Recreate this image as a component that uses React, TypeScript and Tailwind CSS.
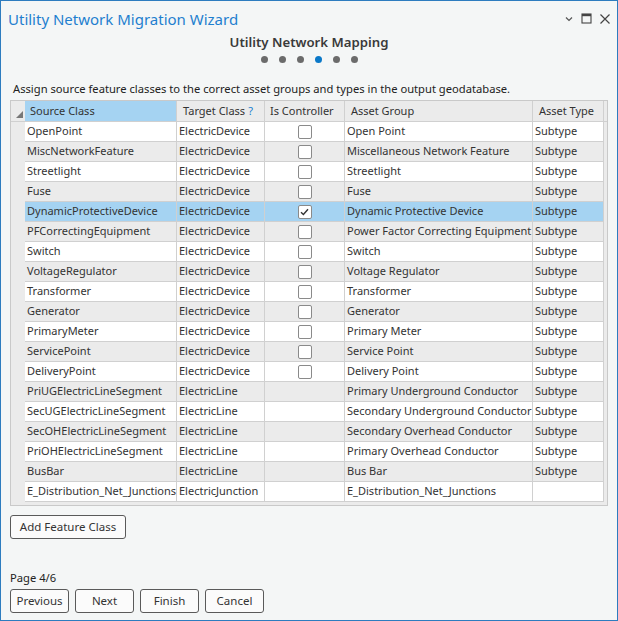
import React from "react";

type Row = {
  source: string;
  target: string;
  controller: boolean | null;
  group: string;
  type: string;
};

const rows: Row[] = [
  { source: "OpenPoint", target: "ElectricDevice", controller: false, group: "Open Point", type: "Subtype" },
  { source: "MiscNetworkFeature", target: "ElectricDevice", controller: false, group: "Miscellaneous Network Feature", type: "Subtype" },
  { source: "Streetlight", target: "ElectricDevice", controller: false, group: "Streetlight", type: "Subtype" },
  { source: "Fuse", target: "ElectricDevice", controller: false, group: "Fuse", type: "Subtype" },
  { source: "DynamicProtectiveDevice", target: "ElectricDevice", controller: true, group: "Dynamic Protective Device", type: "Subtype" },
  { source: "PFCorrectingEquipment", target: "ElectricDevice", controller: false, group: "Power Factor Correcting Equipment", type: "Subtype" },
  { source: "Switch", target: "ElectricDevice", controller: false, group: "Switch", type: "Subtype" },
  { source: "VoltageRegulator", target: "ElectricDevice", controller: false, group: "Voltage Regulator", type: "Subtype" },
  { source: "Transformer", target: "ElectricDevice", controller: false, group: "Transformer", type: "Subtype" },
  { source: "Generator", target: "ElectricDevice", controller: false, group: "Generator", type: "Subtype" },
  { source: "PrimaryMeter", target: "ElectricDevice", controller: false, group: "Primary Meter", type: "Subtype" },
  { source: "ServicePoint", target: "ElectricDevice", controller: false, group: "Service Point", type: "Subtype" },
  { source: "DeliveryPoint", target: "ElectricDevice", controller: false, group: "Delivery Point", type: "Subtype" },
  { source: "PriUGElectricLineSegment", target: "ElectricLine", controller: null, group: "Primary Underground Conductor", type: "Subtype" },
  { source: "SecUGElectricLineSegment", target: "ElectricLine", controller: null, group: "Secondary Underground Conductor", type: "Subtype" },
  { source: "SecOHElectricLineSegment", target: "ElectricLine", controller: null, group: "Secondary Overhead Conductor", type: "Subtype" },
  { source: "PriOHElectricLineSegment", target: "ElectricLine", controller: null, group: "Primary Overhead Conductor", type: "Subtype" },
  { source: "BusBar", target: "ElectricLine", controller: null, group: "Bus Bar", type: "Subtype" },
  { source: "E_Distribution_Net_Junctions", target: "ElectricJunction", controller: null, group: "E_Distribution_Net_Junctions", type: "" },
];

function cx(...xs: Array<string | false | undefined | null>) {
  return xs.filter(Boolean).join(" ");
}

function Checkbox({ checked }: { checked: boolean }) {
  return (
    <span className="flex h-[14px] w-[14px] items-center justify-center rounded-[2px] border border-[#8a8a8a] bg-white">
      {checked && (
        <svg width="9" height="8" viewBox="0 0 9 8" fill="none">
          <path d="M1 4.2 L3.4 6.5 L8 1.2" stroke="#333" strokeWidth="1.4" />
        </svg>
      )}
    </span>
  );
}

function Btn({ children, w }: { children: React.ReactNode; w: string }) {
  return (
    <button
      type="button"
      className={cx(
        "h-[24px] rounded-[3px] border border-[#5a5a5a] bg-[#fbfbfb] text-[11.5px] text-[#333]",
        w
      )}
    >
      {children}
    </button>
  );
}

const cell = "flex items-center border-r border-[#d0d0d0] pl-[2px] whitespace-nowrap overflow-hidden";

export default function App() {
  return (
    <div
      className="flex h-[621px] w-[618px] flex-col border border-[#2d7cbf] bg-[#f4f6f6] text-[#333]"
      style={{ fontFamily: '"Noto Sans", "Open Sans", sans-serif' }}
    >
      {/* title bar */}
      <div className="flex h-[33px] items-center justify-between pl-[7px] pr-[6px] pt-[2px]">
        <span className="text-[15px] leading-[20px] text-[#1f7fcf]">Utility Network Migration Wizard</span>
        <div className="flex items-center gap-[7px] text-[#444]">
          <svg width="10" height="10" viewBox="0 0 10 10" fill="none">
            <path d="M2 3.5 L5 6.5 L8 3.5" stroke="#555" strokeWidth="1.2" />
          </svg>
          <svg width="11" height="11" viewBox="0 0 11 11" fill="none">
            <rect x="1" y="1" width="9" height="9" stroke="#444" strokeWidth="1.1" />
            <rect x="1" y="1" width="9" height="2.2" fill="#444" />
          </svg>
          <svg width="12" height="12" viewBox="0 0 12 12" fill="none">
            <path d="M1.5 1.5 L10.5 10.5 M10.5 1.5 L1.5 10.5" stroke="#444" strokeWidth="1.2" />
          </svg>
        </div>
      </div>

      {/* step heading */}
      <div className="flex flex-col items-center">
        <div className="text-[13.2px] font-semibold leading-[16px] text-[#3a3a3a]">Utility Network Mapping</div>
        <div className="mt-[6px] flex gap-[11px]">
          {[0, 1, 2, 3, 4, 5].map((i) => (
            <span
              key={i}
              className={cx("h-[7px] w-[7px] rounded-full", i === 3 ? "bg-[#0a78c8]" : "bg-[#6b6b6b]")}
            />
          ))}
        </div>
      </div>

      <div className="mt-[18px] pl-[12px] text-[11.2px] leading-[16px] text-[#222]">
        Assign source feature classes to the correct asset groups and types in the output geodatabase.
      </div>

      {/* grid */}
      <div className="mx-[9px] mt-[3px] h-[406px] border border-[#c9c9c9] bg-[#ebebeb] text-[11px]">
        <div className="flex h-[21px] border-b border-[#d0d0d0] bg-[#ebebeb]">
          <div className="relative w-[14px]">
            <svg className="absolute bottom-[3px] right-[2px]" width="7" height="7" viewBox="0 0 7 7">
              <path d="M7 0 L7 7 L0 7 Z" fill="#777" />
            </svg>
          </div>
          <div className={cx(cell, "w-[152px] bg-[#a5d3f2] pl-[5px]")}>Source Class</div>
          <div className={cx(cell, "w-[88px] pl-[6px]")}>
            Target Class <span className="ml-[3px] text-[#1a7fd0]">?</span>
          </div>
          <div className={cx(cell, "w-[80px] pl-[5px]")}>Is Controller</div>
          <div className={cx(cell, "w-[188px] pl-[6px]")}>Asset Group</div>
          <div className={cx(cell, "w-[71px] pl-[6px]")}>Asset Type</div>
        </div>
        {rows.map((r, i) => {
          const bg = i === 4 ? "bg-[#a5d3f2]" : i % 2 === 0 ? "bg-white" : "bg-[#ebebeb]";
          return (
            <div key={r.source} className="flex h-[20px]">
              <div className="w-[14px] bg-[#ebebeb]" />
              <div className={cx("flex border-b border-[#d0d0d0]", bg)}>
                <div className={cx(cell, "w-[152px]")}>{r.source}</div>
                <div className={cx(cell, "w-[88px]")}>{r.target}</div>
                <div className={cx(cell, "w-[80px] justify-center pl-0 pr-[2px]")}>
                  {r.controller !== null && <Checkbox checked={r.controller} />}
                </div>
                <div className={cx(cell, "w-[188px]")}>{r.group}</div>
                <div className={cx(cell, "w-[71px]")}>{r.type}</div>
              </div>
            </div>
          );
        })}
      </div>

      <div className="mt-[7px] pl-[9px]">
        <Btn w="w-[116px]">Add Feature Class</Btn>
      </div>

      <div className="mt-auto pl-[9px] text-[11.2px] leading-[16px] text-[#222]">Page 4/6</div>
      <div className="mb-[7px] mt-[3px] flex gap-[6px] pl-[9px]">
        <Btn w="w-[59px]">Previous</Btn>
        <Btn w="w-[59px]">Next</Btn>
        <Btn w="w-[59px]">Finish</Btn>
        <Btn w="w-[59px]">Cancel</Btn>
      </div>
    </div>
  );
}
